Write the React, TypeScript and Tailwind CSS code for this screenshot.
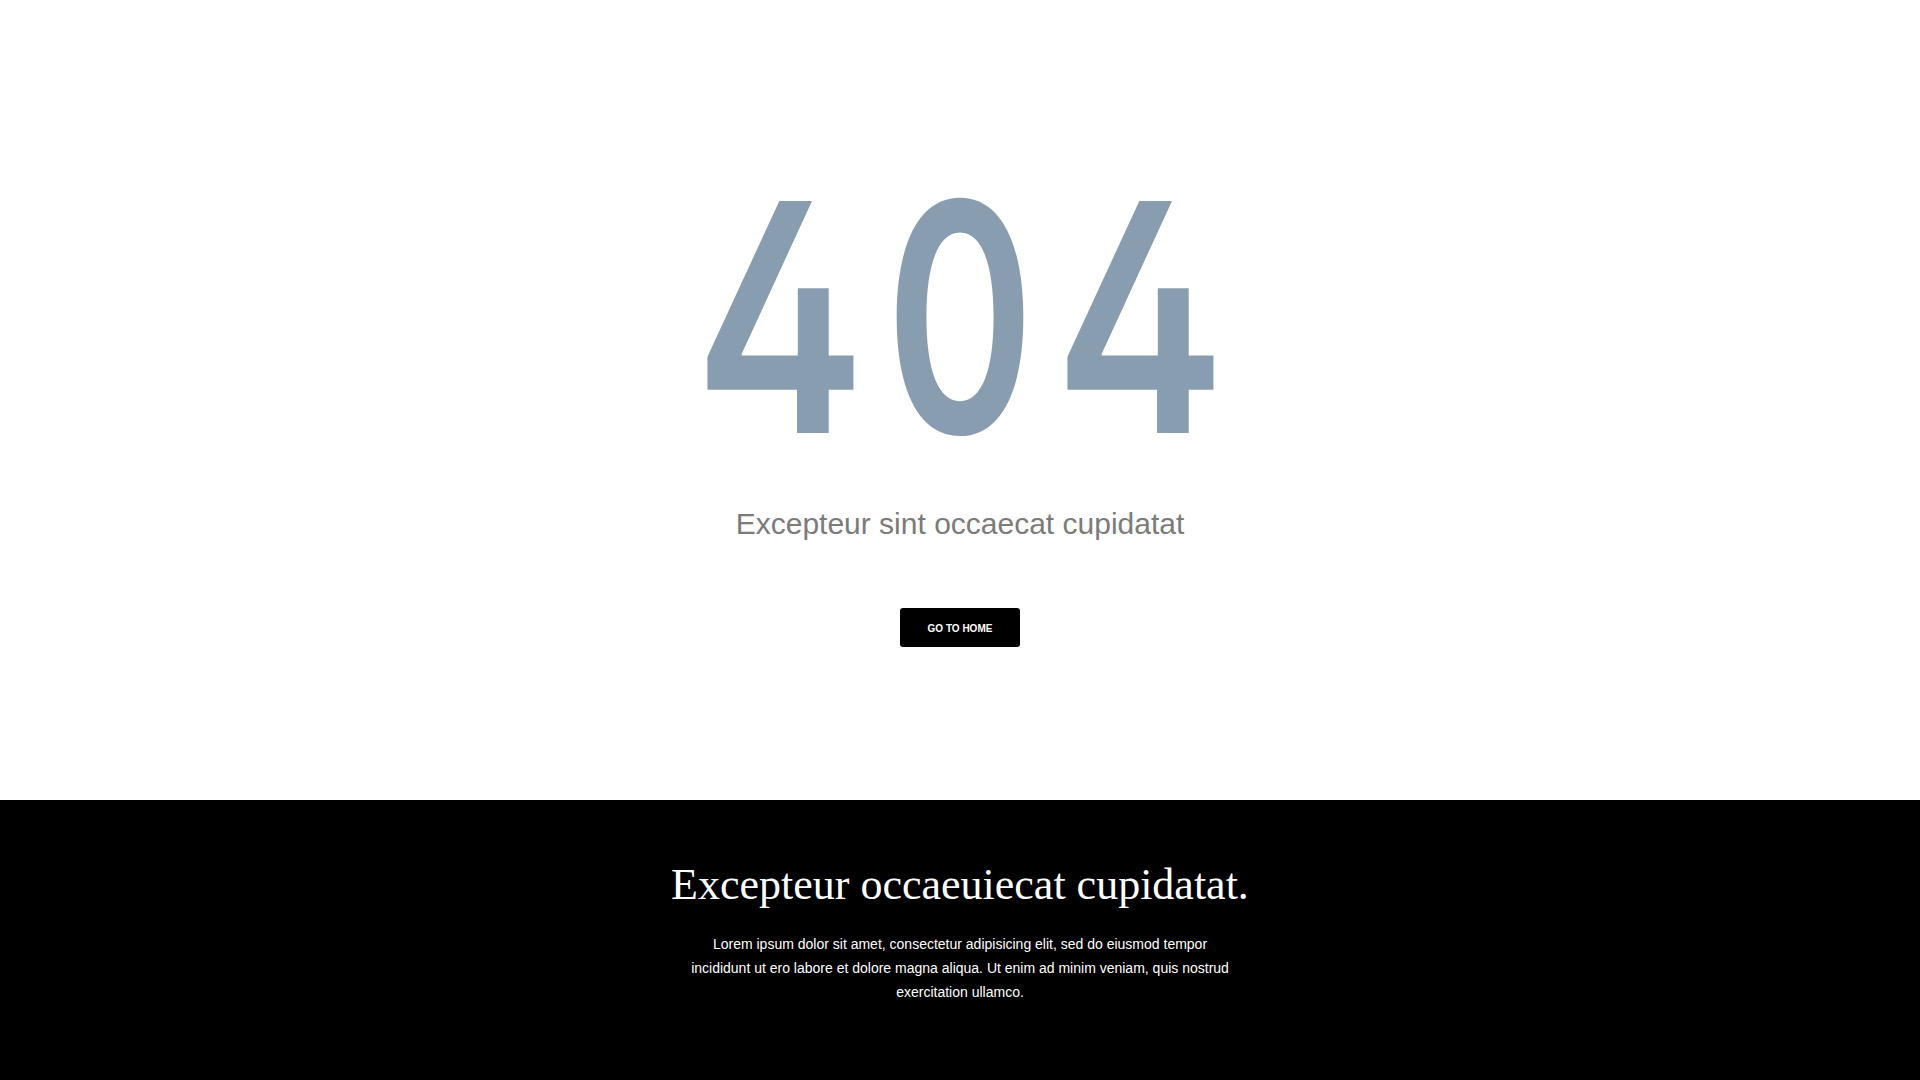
const DIGITS = [
  { char: "4", width: "w-[144px]", scale: "scale-x-[0.81]" },
  { char: "0", width: "w-[128px]", scale: "scale-x-[0.71]" },
  { char: "4", width: "w-[144px]", scale: "scale-x-[0.81]" },
];

export default function App() {
  return (
    <div className="flex min-h-screen flex-col bg-white font-['Liberation_Sans',Arial,sans-serif]">
      {/* Error section */}
      <section className="flex h-[800px] flex-col items-center pt-[158px]">
        <h1 className="flex gap-[44px] font-['Inter',sans-serif] text-[319px] font-[560] leading-none text-[#889eb0] [font-feature-settings:'cv02']">
          {DIGITS.map((d, i) => (
            <span key={i} className={`flex justify-center ${d.width} ${d.scale}`}>
              {d.char}
            </span>
          ))}
        </h1>
        <p className="mt-[32px] text-[30px] leading-none text-[#7b7b7b]">
          Excepteur sint occaecat cupidatat
        </p>
        <a
          href="#"
          className="mt-[69px] flex h-[39px] w-[120px] items-center justify-center rounded-[3px] bg-black pt-[2px] text-[10px] font-bold uppercase text-white"
        >
          Go to home
        </a>
      </section>

      {/* Footer */}
      <footer className="flex h-[280px] flex-col items-center bg-black pt-[63px] text-center text-white">
        <h2 className="font-['Liberation_Serif','Times_New_Roman',serif] text-[44px] leading-none">
          Excepteur occaeuiecat cupidatat.
        </h2>
        <p className="mt-[26px] max-w-[550px] text-[14px] leading-[1.7]">
          Lorem ipsum dolor sit amet, consectetur adipisicing elit, sed do
          eiusmod tempor incididunt ut ero labore et dolore magna aliqua. Ut
          enim ad minim veniam, quis nostrud exercitation ullamco.
        </p>
      </footer>
    </div>
  );
}
